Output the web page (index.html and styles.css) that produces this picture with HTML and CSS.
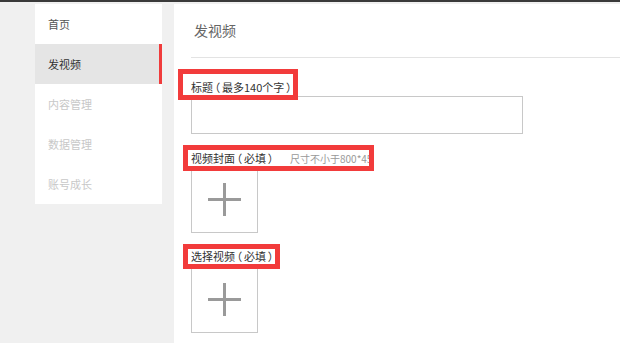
FILE: index.html
```html
<!DOCTYPE html>
<html lang="zh-CN">
<head>
<meta charset="utf-8">
<title>发视频</title>
<link rel="stylesheet" href="styles.css">
</head>
<body>
<div class="topbar"></div>
<div class="layout">
  <nav class="sidebar">
    <div class="nav-item">首页</div>
    <div class="nav-item active">发视频</div>
    <div class="nav-item disabled">内容管理</div>
    <div class="nav-item disabled">数据管理</div>
    <div class="nav-item disabled">账号成长</div>
  </nav>
  <main class="main">
    <div class="page-title">发视频</div>
    <div class="divider"></div>
    <div class="form">
      <div class="field field-title">
        <div class="label label-title">标题<span class="paren">（</span>最多140个字<span class="paren">）</span></div>
        <div class="text-input"></div>
      </div>
      <div class="field field-cover">
        <div class="label label-cover">视频封面<span class="paren">（</span>必填<span class="paren">）</span><span class="hint">尺寸不小于800*450</span></div>
        <div class="upload"><span class="plus"></span></div>
      </div>
      <div class="field field-video">
        <div class="label label-video">选择视频<span class="paren">（</span>必填<span class="paren">）</span></div>
        <div class="upload"><span class="plus"></span></div>
      </div>
    </div>
  </main>
</div>
</body>
</html>
```

FILE: styles.css
```css
html, body {
  margin: 0;
  padding: 0;
}
body {
  width: 620px;
  height: 343px;
  overflow: hidden;
  background: #f0f0f0;
  font-family: "Noto Sans CJK SC", "Noto Sans", sans-serif;
  color: #333;
}
.topbar {
  height: 2px;
  background: #3a3a3a;
}
.layout {
  display: flex;
  align-items: flex-start;
  padding-top: 2px;
  padding-left: 35px;
  gap: 12px;
  height: 341px;
  box-sizing: border-box;
}
.sidebar {
  width: 127px;
  background: #fff;
  flex: none;
}
.nav-item {
  height: 40px;
  line-height: 40px;
  padding-left: 13px;
  font-size: 11px;
  color: #555;
  box-sizing: border-box;
}
.nav-item.active {
  background: #e5e5e5;
  color: #333;
  border-right: 3px solid #f03c3c;
}
.nav-item.disabled {
  color: #c8c8c8;
}
.main {
  flex: 1;
  align-self: stretch;
  background: #fff;
  padding-left: 17px;
}
.page-title {
  height: 53px;
  line-height: 53px;
  padding-left: 3px;
  font-size: 14px;
  color: #666;
}
.divider {
  height: 1px;
  background: #e3e3e3;
}
.form {
  padding-top: 11px;
}
.field {
  display: flex;
  flex-direction: column;
  align-items: flex-start;
}
.label {
  position: relative;
  z-index: 1;
  border: 5px solid #f23b3b;
  background: #fff;
  font-size: 11px;
  line-height: 16px;
  color: #333;
  white-space: nowrap;
}
.paren {
  display: inline-block;
  width: 9px;
  text-align: center;
  font-feature-settings: "halt" 1;
}
.label-title {
  margin-left: -13px;
  height: 16px;
  padding: 5px 0 0 8px;
  margin-bottom: -4px;
}
.label-cover {
  margin-left: -8px;
  width: 178px;
  height: 16px;
  padding-left: 3px;
  margin-bottom: -5px;
  overflow: hidden;
}
.label-video {
  margin-left: -8px;
  height: 15px;
  line-height: 15px;
  padding-left: 3px;
  margin-bottom: -3px;
}
.hint {
  margin-left: 15px;
  font-size: 10px;
  color: #999;
}
.text-input {
  width: 330px;
  height: 36px;
  border: 1px solid #c8c8c8;
}
.field-cover {
  margin-top: 11px;
}
.field-video {
  margin-top: 11px;
}
.upload {
  width: 65px;
  height: 65px;
  border: 1px solid #c8c8c8;
  display: flex;
  align-items: center;
  justify-content: center;
}
.plus {
  width: 33px;
  height: 33px;
  background:
    linear-gradient(#9a9a9a, #9a9a9a) center / 33px 3px no-repeat,
    linear-gradient(#9a9a9a, #9a9a9a) center / 3px 33px no-repeat;
}
```
